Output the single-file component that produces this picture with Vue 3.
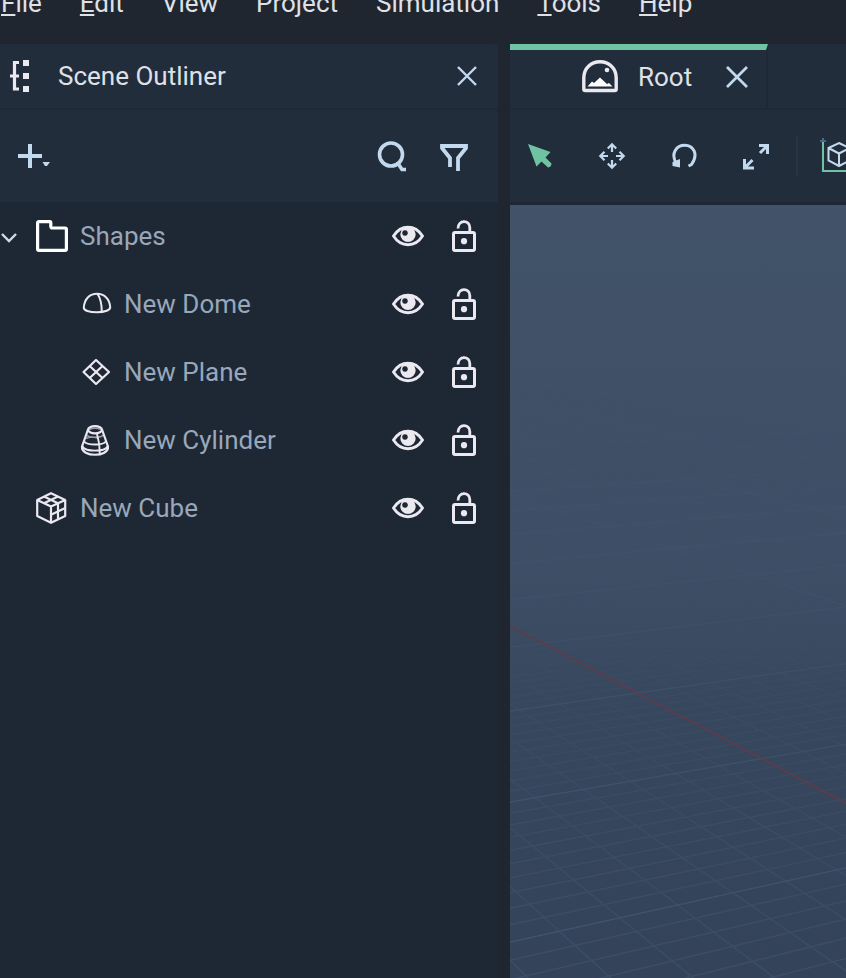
<script setup>
import { ref } from 'vue'

const menus = [
  { key: 'F', rest: 'ile', underline: true },
  { key: 'E', rest: 'dit', underline: true },
  { key: 'V', rest: 'iew', underline: false },
  { key: 'P', rest: 'roject', underline: false },
  { key: 'S', rest: 'imulation', underline: false },
  { key: 'T', rest: 'ools', underline: true },
  { key: 'H', rest: 'elp', underline: true },
]

const items = ref([
  { name: 'Shapes', icon: 'folder', child: false, visible: true, locked: false },
  { name: 'New Dome', icon: 'dome', child: true, visible: true, locked: false },
  { name: 'New Plane', icon: 'plane', child: true, visible: true, locked: false },
  { name: 'New Cylinder', icon: 'cylinder', child: true, visible: true, locked: false },
  { name: 'New Cube', icon: 'cube', child: false, visible: true, locked: false },
])

// Perspective floor grid: 1 / (distance below the horizon) is linear in the line index.
const HORIZON = 77
const WIDTH = 336
function edge(base, step, n) {
  return HORIZON + 1 / (base + step * n)
}
function family(from, to, left, right) {
  const lines = []
  for (let n = from; n <= to; n++) {
    const y1 = edge(left[0], left[1], n)
    const y2 = edge(right[0], right[1], n)
    // Extended to three times the base width so wide windows stay covered.
    lines.push({ n, x2: WIDTH * 3, y1, y2: y1 + (y2 - y1) * 3, major: n % 10 === 0 })
  }
  return lines
}
const rows = family(-10, 110, [0.001515, 0.0000408], [0.001707, 0.0000457])
const columns = family(-13, 40, [0.002907, 0.000179], [0.001919, 0.000117]).filter((l) => l.n !== 0)
const gridLines = [...rows, ...columns]
const minor = gridLines.filter((l) => !l.major)
const major = gridLines.filter((l) => l.major)
</script>

<template>
  <div class="app">
    <header class="menubar">
      <nav class="menus" aria-label="Main menu">
        <button v-for="m in menus" :key="m.key" type="button" class="menu">
          <span :class="{ mnemonic: m.underline }">{{ m.key }}</span>{{ m.rest }}
        </button>
      </nav>
    </header>

    <main class="workspace">
      <section class="dock">
        <div class="panel-head">
          <svg class="outliner-icon" width="20" height="32" viewBox="0 0 20 32" aria-hidden="true">
            <path d="M9 2.500H4.500V29H9M0 16H9" fill="none" stroke="#ebe8f0" stroke-width="3.200" />
            <path d="M13 0h6v6h-6zM13 13h6v6h-6zM13 26h6v6h-6z" fill="#ebe8f0" />
          </svg>
          <h2 class="title">Scene Outliner</h2>
          <button type="button" class="icon-btn" aria-label="Close Scene Outliner">
            <svg width="20" height="20" viewBox="0 0 20 20"><path d="M1 1L19 19M19 1L1 19" stroke="#c3d9ee" stroke-width="2.400" /></svg>
          </button>
        </div>

        <div class="panel-tools">
          <button type="button" class="icon-btn add" aria-label="Add item">
            <svg width="32" height="28" viewBox="0 0 32 28">
              <path d="M12 2V26M0 14H24" stroke="#c3d9ee" stroke-width="4" />
              <path d="M24.500 20H32L29 24H27Z" fill="#c3d9ee" />
            </svg>
          </button>
          <button type="button" class="icon-btn" aria-label="Search">
            <svg width="30" height="32" viewBox="0 0 30 32" fill="none" stroke="#c3d9ee">
              <circle cx="14" cy="14.500" r="11.500" stroke-width="3.600" />
              <path d="M20 22L25 29.500H29" stroke-width="3.600" />
            </svg>
          </button>
          <button type="button" class="icon-btn" aria-label="Filter">
            <svg width="28" height="32" viewBox="0 0 28 32" fill="none" stroke="#c3d9ee" stroke-width="3.800">
              <path d="M10 27V18L2 8V6H26V8L18 18V31" />
            </svg>
          </button>
        </div>

        <ul class="tree">
          <li v-for="item in items" :key="item.name" class="row" :class="{ child: item.child }">
            <span class="twist">
              <button v-if="item.icon === 'folder'" type="button" class="icon-btn" aria-label="Collapse Shapes">
                <svg width="18" height="16" viewBox="0 0 18 16"><path d="M2 6L9 13L16 6" fill="none" stroke="#d5dbe5" stroke-width="2.400" /></svg>
              </button>
            </span>
            <svg class="glyph" width="32" height="32" viewBox="0 0 32 32" fill="none" stroke="#ebe8f0" stroke-width="2" stroke-linejoin="round" aria-hidden="true">
              <path v-if="item.icon === 'folder'" stroke="#ffffff" stroke-width="3.200" d="M3 1.700H14Q14.800 1.700 14.800 3V6.500Q15 8 16.500 8H29Q30.400 8 30.400 9.500V29Q30.400 30.400 29 30.400H3Q1.600 30.400 1.600 29V3Q1.600 1.700 3 1.700Z" />
              <g v-else-if="item.icon === 'dome'" stroke-width="2">
                <path d="M3.800 19.500C4.500 10.500 10 5.800 17 5.800S29.500 10.500 30.200 19C30.500 22 25 24.200 17 24.200S3.600 22.500 3.800 19.500Z" />
                <path d="M17.500 6C21 11 21.800 17 21.800 23.800" />
              </g>
              <g v-else-if="item.icon === 'plane'" stroke-width="2.200">
                <path d="M16 4L29 16L16 28L3.500 16ZM9.700 10L22.500 22M22.500 10L9.700 22" />
              </g>
              <g v-else-if="item.icon === 'cylinder'" stroke-width="2.200">
                <ellipse cx="15" cy="5.800" rx="7" ry="3.600" />
                <path d="M8 5.500L2 22.500C1 33.500 29 33.500 28 22.500L22 5.500" />
                <path d="M2.500 22.500C5 28 25 28 27.500 22.500M4.200 17.500C7 21.500 23 21.500 25.800 17.500M17 10Q20 20 19.800 30" stroke-width="1.900" />
                <path d="M6.500 11C9 14 21 14 23.500 11M6 14.500C9 12.500 14 12.500 17 14M9 5.500Q15 3 21 5.500" stroke-width="1.600" opacity="0.600" />
              </g>
              <g v-else stroke-width="2.200">
                <path d="M15 1.200L29.200 8V24L15 30.800L1.200 24V8ZM1.200 8L15 14.500L29.200 8M15 14.500V30.800" />
                <path d="M8 4.600L22 11.300M22 4.600L8 11.300M22 11.300V27.400M15 22.700L29.200 16" />
              </g>
            </svg>
            <span class="name">{{ item.name }}</span>
            <button type="button" class="icon-btn" :aria-label="'Toggle visibility of ' + item.name" :aria-pressed="item.visible" @click="item.visible = !item.visible">
              <svg width="32" height="32" viewBox="0 0 32 32">
                <path d="M1.500 16C9 4.300 23 4.300 30.500 16C23 27.700 9 27.700 1.500 16Z" fill="none" stroke="#ebe8f0" stroke-width="2.900" />
                <path d="M16 7A7.700 7.700 0 0 1 23.700 14.300A7.700 7.700 0 0 1 8.300 14.300A7.700 7.700 0 0 1 16 7ZM13 10.200a2.800 2.800 0 1 0 0.010 0Z" fill="#ebe8f0" fill-rule="evenodd" />
              </svg>
            </button>
            <button type="button" class="icon-btn" :aria-label="'Toggle lock of ' + item.name" :aria-pressed="item.locked" @click="item.locked = !item.locked">
              <svg width="24" height="32" viewBox="0 0 24 32" fill="none" stroke="#ebe8f0" stroke-width="3">
                <rect x="1.500" y="12.500" width="21" height="18" rx="1.500" />
                <path d="M6 8.500C6 -0.500 17.800 -0.500 17.800 7.500V12" stroke-width="2.800" />
                <circle cx="12" cy="21.200" r="3.100" fill="#ebe8f0" stroke="none" />
              </svg>
            </button>
          </li>
        </ul>
      </section>

      <section class="stage">
        <div class="tabs">
          <div class="tab">
            <svg width="36" height="34" viewBox="0 0 36 34" aria-hidden="true">
              <path d="M1.800 18C1.800 8 9 1.800 18 1.800S34.200 8 34.200 18V29Q34.200 30.500 32.700 30.500H3.300Q1.800 30.500 1.800 29Z" fill="none" stroke="#ebe8f0" stroke-width="3.400" />
              <circle cx="25" cy="10" r="2.300" fill="#ebe8f0" />
              <path d="M5.500 26.500L10 21.500L12 23L18 17.500L25 24L27 23L30.500 26.500Z" fill="#ffffff" />
            </svg>
            <span class="tab-name">Root</span>
            <button type="button" class="icon-btn" aria-label="Close Root">
              <svg width="22" height="22" viewBox="0 0 22 22"><path d="M1 1L21 21M21 1L1 21" stroke="#c3d9ee" stroke-width="2.700" /></svg>
            </button>
          </div>
        </div>

        <div class="stage-tools">
          <button type="button" class="icon-btn" aria-label="Select">
            <svg width="28" height="28" viewBox="0 0 28 28"><path d="M2 2L24.500 10L19.500 15.500L25.500 21.500Q25.500 25 22 25.500L15.500 19.500L10.500 24.500Z" fill="#6fc3a3" /></svg>
          </button>
          <button type="button" class="icon-btn" aria-label="Move">
            <svg width="28" height="28" viewBox="0 0 28 28" fill="none" stroke="#c3d9ee" stroke-width="2.200">
              <path d="M14 2V10M14 18V26M2 14H10M18 14H26M9.800 6.500L14 2.300L18.200 6.500M9.800 21.500L14 25.700L18.200 21.500M6.500 9.800L2.300 14L6.500 18.200M21.500 9.800L25.700 14L21.500 18.200" />
            </svg>
          </button>
          <button type="button" class="icon-btn" aria-label="Rotate">
            <svg width="28" height="28" viewBox="0 0 28 28">
              <path d="M6 21C0.500 11 6.500 3.300 14.800 3.300S29 12 21.500 22.500L18.500 24" fill="none" stroke="#c3d9ee" stroke-width="3" />
              <path d="M10 17V25.500L2.500 24V20Z" fill="#c3d9ee" />
            </svg>
          </button>
          <button type="button" class="icon-btn" aria-label="Scale">
            <svg width="28" height="28" viewBox="0 0 28 28" fill="none" stroke="#c3d9ee" stroke-width="3">
              <path d="M17 3.500H25.500V12M25 4L18 11M2.500 17V26H12M3 25.500L10.500 18" />
            </svg>
          </button>
          <span class="divider"></span>
          <button type="button" class="icon-btn" aria-label="World space">
            <svg width="44" height="38" viewBox="0 0 44 38" fill="none">
              <path d="M3 4V34H44" stroke="#6fc3a3" stroke-width="2" />
              <path d="M3 1V5M0 4H6" stroke="#48698a" stroke-width="2" />
              <path d="M19 6L29.500 11V23.500L19 29L8.500 23.500V11ZM8.500 11L19 16.500L29.500 11M19 16.500V29" stroke="#c3d9ee" stroke-width="2" />
            </svg>
          </button>
        </div>

        <div class="viewport">
          <svg class="grid" viewBox="0 0 336 773" preserveAspectRatio="xMinYMin slice" aria-hidden="true">
            <defs>
              <linearGradient id="fade" x1="0" y1="200" x2="0" y2="773" gradientUnits="userSpaceOnUse">
                <stop offset="0" stop-color="#fff" stop-opacity="0.050" />
                <stop offset="0.400" stop-color="#fff" stop-opacity="0.500" />
                <stop offset="1" stop-color="#fff" stop-opacity="1" />
              </linearGradient>
              <mask id="haze" maskUnits="userSpaceOnUse" x="0" y="0" width="1008" height="773">
                <rect width="1008" height="773" fill="url(#fade)" />
              </mask>
            </defs>
            <g mask="url(#haze)">
              <line v-for="(l, i) in minor" :key="'n' + i" x1="0" :y1="l.y1" :x2="l.x2" :y2="l.y2" stroke="#3d4e67" stroke-width="1.400" />
              <line v-for="(l, i) in major" :key="'m' + i" x1="0" :y1="l.y1" :x2="l.x2" :y2="l.y2" stroke="#415774" stroke-width="1.300" />
            </g>
            <line x1="0" y1="421" x2="1008" y2="952" stroke="#5e3c4b" stroke-width="1.800" />
          </svg>
        </div>
      </section>
    </main>
  </div>
</template>

<style>
body {
  margin: 0;
  background: #1f2630;
}
</style>

<style scoped>
.app {
  display: flex;
  flex-direction: column;
  min-height: 100vh;
  overflow: hidden;
  background: #1f2630;
  color: #dfe1e6;
  font-family: Roboto, sans-serif;
  font-size: 26px;
  line-height: 32px;
}
button {
  font: inherit;
  color: inherit;
  padding: 0;
  border: 0;
  background: none;
}
.icon-btn {
  display: flex;
  flex: none;
}
svg {
  display: block;
  flex: none;
}
.menubar {
  height: 44px;
  overflow: hidden;
}
.menus {
  display: flex;
  gap: 38px;
  margin-top: -13px;
  padding-left: 1px;
}
.menu {
  flex: none;
}
.mnemonic {
  text-decoration: underline;
  text-decoration-thickness: 2px;
  text-underline-offset: 2px;
  text-decoration-skip-ink: none;
}
.workspace {
  flex: 1;
  display: grid;
  grid-template-columns: minmax(0, 498fr) minmax(0, 336fr);
  gap: 12px;
}
.dock,
.stage {
  display: flex;
  flex-direction: column;
  min-width: 0;
}
.dock {
  background: #1e2835;
}
.panel-head,
.tabs {
  display: flex;
  align-items: center;
  height: 64px;
  background: #222d3c;
  border-bottom: 2px solid #1f2936;
}
.panel-head {
  padding: 0 21px 0 10px;
  border-radius: 0 4px 0 0;
}
.title {
  flex: 1;
  margin: 0 0 0 28px;
  font-size: 26px;
  font-weight: 400;
}
.panel-tools {
  display: flex;
  align-items: center;
  gap: 33px;
  height: 92px;
  padding: 0 30px 0 18px;
  background: #222d3c;
  border-radius: 0 4px 0 0;
}
.add {
  margin-right: auto;
}
.tree {
  list-style: none;
  margin: 0;
  padding: 0;
}
.row {
  display: flex;
  align-items: center;
  height: 68px;
  padding-right: 22px;
}
.twist {
  width: 36px;
}
.child .twist {
  width: 80px;
}
.name {
  flex: 1;
  margin-left: 12px;
  color: #98a7ba;
}
.row .icon-btn + .icon-btn {
  margin-left: 28px;
}
.tab {
  display: flex;
  align-items: center;
  box-sizing: border-box;
  width: 258px;
  height: 64px;
  padding: 0 18px 4px 72px;
  border-top: 6px solid #6fc3a3;
  border-right: 2px solid #1f2936;
}
.tab-name {
  flex: 1;
  margin-left: 20px;
}
.stage-tools {
  display: flex;
  align-items: center;
  gap: 44px;
  height: 92px;
  padding-left: 16px;
  overflow: hidden;
  background: #222d3c;
  border-bottom: 3px solid #1e2835;
}
.divider {
  flex: none;
  width: 2px;
  height: 42px;
  margin: 0 -22px 0 -18px;
  background: #283344;
}
.viewport {
  flex: 1;
  display: grid;
  background: linear-gradient(#415369, #3f4f66 45%, #37475d 65%, #34435a);
  min-height: 600px;
  overflow: hidden;
}
.grid {
  width: 100%;
  height: 100%;
}
</style>
